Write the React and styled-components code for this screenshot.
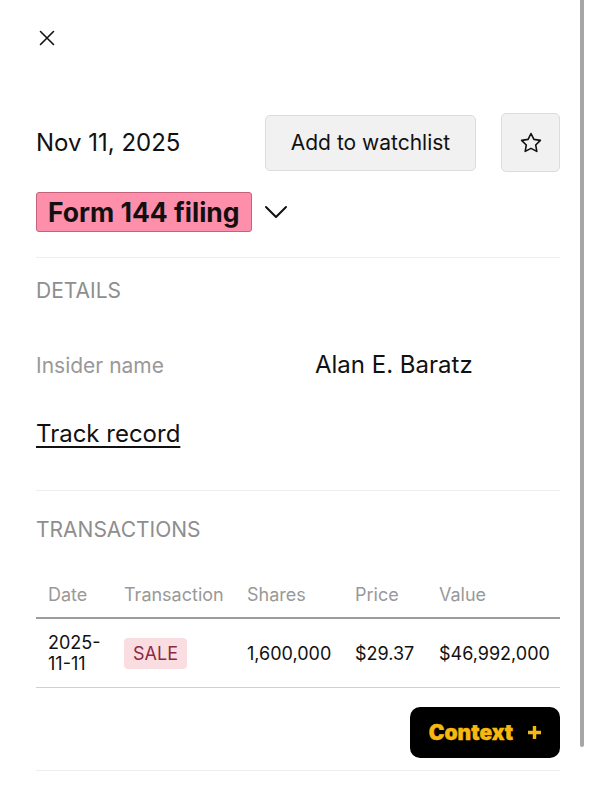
import React from 'react';
import styled, { createGlobalStyle } from 'styled-components';

const GlobalStyle = createGlobalStyle`
  html, body {
    margin: 0;
    padding: 0;
    background: #fff;
    font-family: Inter, 'Noto Sans', sans-serif;
    color: #111;
  }
  * {
    box-sizing: border-box;
  }
`;

const Panel = styled.div`
  position: relative;
  height: 100vh;
  overflow: hidden;
  background: #fff;
`;

const ScrollThumb = styled.div`
  position: absolute;
  top: 0;
  left: 580px;
  width: 4px;
  height: 747px;
  border-radius: 0 0 2px 2px;
  background: #a6a6a6;
`;

const Content = styled.div`
  padding: 24px 29px 0 36px;
  display: flex;
  flex-direction: column;
`;

const CloseBtn = styled.button`
  width: 28px;
  height: 28px;
  margin-left: -3px;
  padding: 0;
  border: none;
  background: none;
  display: flex;
  align-items: center;
  justify-content: center;
  color: #111;
  cursor: pointer;
`;

const HeaderRow = styled.div`
  margin-top: 61px;
  display: flex;
  align-items: center;
  justify-content: space-between;
`;

const DateText = styled.div`
  font-size: 24px;
  color: #111;
`;

const Actions = styled.div`
  display: flex;
  align-items: center;
  gap: 25px;
`;

const WatchBtn = styled.button`
  height: 56px;
  width: 211px;
  border: 1px solid #dcdcdc;
  border-radius: 5px;
  background: #f1f1f1;
  font-family: inherit;
  font-size: 21px;
  color: #111;
  cursor: pointer;
`;

const StarBtn = styled.button`
  width: 59px;
  height: 59px;
  border: 1px solid #dcdcdc;
  border-radius: 5px;
  background: #f1f1f1;
  display: flex;
  align-items: center;
  justify-content: center;
  color: #111;
  cursor: pointer;
`;

const BadgeRow = styled.div`
  margin-top: 20px;
  display: flex;
  align-items: center;
  gap: 12px;
`;

const FormBadge = styled.span`
  height: 40px;
  display: inline-flex;
  align-items: center;
  padding: 0 11px;
  background: #fd8fab;
  border: 1px solid #c5637d;
  border-radius: 3px;
  font-size: 26.5px;
  font-weight: 700;
  color: #111;
`;

const Divider = styled.hr`
  margin: ${(p) => p.$top || 0}px 0 0 0;
  border: none;
  border-top: 1px solid #eeeeee;
`;

const SectionTitle = styled.div`
  margin-top: ${(p) => p.$top}px;
  font-size: 21px;
  color: #8e8e8e;
  text-transform: uppercase;
`;

const InfoRow = styled.div`
  margin-top: 47px;
  display: grid;
  grid-template-columns: 279px 1fr;
  align-items: baseline;
`;

const InfoLabel = styled.div`
  font-size: 21px;
  color: #999;
`;

const InfoValue = styled.div`
  font-size: 24px;
  color: #111;
`;

const TrackLink = styled.a`
  margin-top: 40px;
  align-self: flex-start;
  font-size: 24px;
  color: #111;
  text-decoration: underline;
  text-underline-offset: 4px;
  text-decoration-thickness: 1.5px;
`;

const Table = styled.table`
  margin-top: 42px;
  width: 100%;
  border-collapse: collapse;
  table-layout: fixed;
  font-size: 18px;
`;

const Th = styled.th`
  width: ${(p) => p.$w}px;
  text-align: left;
  font-weight: 400;
  color: #999;
  padding: 0 12px 12px 12px;
  border-bottom: 2px solid #9d9d9d;
`;

const Td = styled.td`
  padding: 13px 12px 13px 12px;
  color: #111;
  border-bottom: 1px solid #d0d0d0;
  vertical-align: middle;
  line-height: 21px;
  white-space: ${(p) => (p.$wrap ? 'normal' : 'nowrap')};
`;

const SaleTag = styled.span`
  display: inline-block;
  padding: 4px 9px;
  background: #f9dde1;
  border-radius: 4px;
  color: #8d2944;
  font-size: 18px;
  line-height: 23px;
`;

const Footer = styled.div`
  margin-top: 19px;
  display: flex;
  justify-content: flex-end;
`;

const ContextBtn = styled.button`
  width: 150px;
  height: 51px;
  border: none;
  border-radius: 10px;
  background: #000;
  color: #f7b90f;
  font-family: Inter, 'Liberation Sans', sans-serif;
  font-size: 21px;
  font-weight: 900;
  display: flex;
  align-items: center;
  justify-content: center;
  gap: 15px;
  cursor: pointer;
  -webkit-text-stroke: 0.4px #f7b90f;
`;

const CloseIcon = () => (
  <svg width="16" height="16" viewBox="0 0 16 16" fill="none">
    <path d="M1.5 1.5 14.5 14.5M14.5 1.5 1.5 14.5" stroke="currentColor" strokeWidth="1.6" strokeLinecap="round" />
  </svg>
);

const StarIcon = () => (
  <svg width="24" height="24" viewBox="0 0 24 24" fill="none" stroke="currentColor" strokeWidth="1.6" strokeLinejoin="round">
    <path d="M12 2.5l2.9 5.9 6.5.95-4.7 4.6 1.1 6.45L12 17.35 6.2 20.4l1.1-6.45-4.7-4.6 6.5-.95z" />
  </svg>
);

const ChevronIcon = () => (
  <svg width="24" height="14" viewBox="0 0 24 14" fill="none">
    <path d="M2 2l10 10L22 2" stroke="currentColor" strokeWidth="2" strokeLinecap="round" strokeLinejoin="round" />
  </svg>
);

const PlusIcon = () => (
  <svg width="13" height="13" viewBox="0 0 13 13">
    <path d="M6.5 0v13M0 6.5h13" stroke="#f7b90f" strokeWidth="3.4" />
  </svg>
);

const columns = [
  { label: 'Date', w: 76 },
  { label: 'Transaction', w: 123 },
  { label: 'Shares', w: 108 },
  { label: 'Price', w: 84 },
  { label: 'Value', w: 133 },
];

export default function App() {
  return (
    <>
      <GlobalStyle />
      <Panel>
        <Content>
          <CloseBtn aria-label="Close">
            <CloseIcon />
          </CloseBtn>

          <HeaderRow>
            <DateText>Nov 11, 2025</DateText>
            <Actions>
              <WatchBtn>Add to watchlist</WatchBtn>
              <StarBtn aria-label="Star">
                <StarIcon />
              </StarBtn>
            </Actions>
          </HeaderRow>

          <BadgeRow>
            <FormBadge>Form 144 filing</FormBadge>
            <ChevronIcon />
          </BadgeRow>

          <Divider $top={25} />

          <SectionTitle $top={20}>Details</SectionTitle>
          <InfoRow>
            <InfoLabel>Insider name</InfoLabel>
            <InfoValue>Alan E. Baratz</InfoValue>
          </InfoRow>
          <TrackLink href="#">Track record</TrackLink>

          <Divider $top={42} />

          <SectionTitle $top={26}>Transactions</SectionTitle>
          <Table>
            <thead>
              <tr>
                {columns.map((c) => (
                  <Th key={c.label} $w={c.w}>
                    {c.label}
                  </Th>
                ))}
              </tr>
            </thead>
            <tbody>
              <tr>
                <Td $wrap>2025-11-11</Td>
                <Td>
                  <SaleTag>SALE</SaleTag>
                </Td>
                <Td>1,600,000</Td>
                <Td>$29.37</Td>
                <Td>$46,992,000</Td>
              </tr>
            </tbody>
          </Table>

          <Footer>
            <ContextBtn>
              Context <PlusIcon />
            </ContextBtn>
          </Footer>

          <Divider $top={12} />
        </Content>
        <ScrollThumb />
      </Panel>
    </>
  );
}
